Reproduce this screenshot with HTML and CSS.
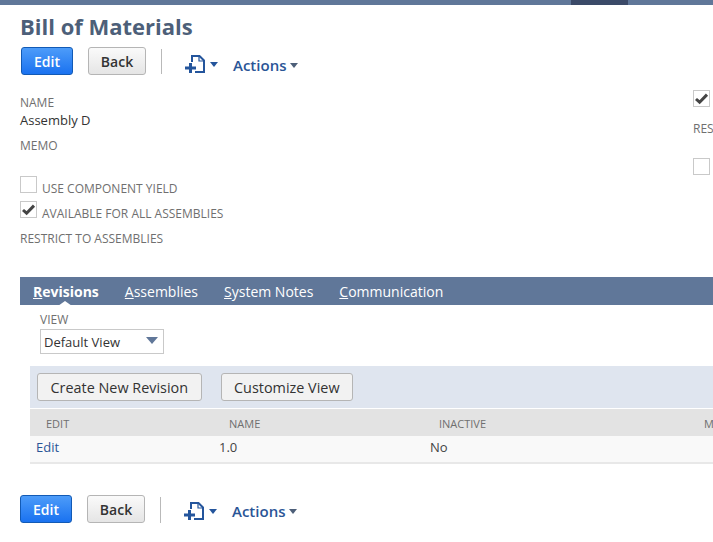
FILE: index.html
```html
<!DOCTYPE html>
<html lang="en">
<head>
<meta charset="utf-8">
<title>Bill of Materials</title>
<link rel="stylesheet" href="styles.css">
</head>
<body>
<svg class="defs" width="0" height="0" aria-hidden="true">
  <symbol id="newdoc" viewBox="0 0 20 18">
    <path d="M7 7V1h7.5L19 5.5V17H10" fill="none" stroke="#24559c" stroke-width="2"/>
    <path d="M14 1V6H19" fill="none" stroke="#24559c" stroke-width="1.2"/>
    <path d="M0 13H11M5.5 8V18" fill="none" stroke="#24559c" stroke-width="3"/>
  </symbol>
  <symbol id="tick" viewBox="0 0 15 15">
    <path d="M2 8l3.6 3.2L13 3.6" fill="none" stroke="#444" stroke-width="3"/>
  </symbol>
</svg>
<div class="topbar"><div class="topbar-active"></div></div>
<main class="page">
  <h1 class="title">Bill of Materials</h1>
  <div class="toolbar toolbar-top">
    <button class="btn btn-primary">Edit</button>
    <button class="btn btn-back">Back</button>
    <span class="divider"></span>
    <svg class="doc-icon"><use href="#newdoc"/></svg>
    <span class="caret caret-blue"></span>
    <span class="actions">Actions</span>
    <span class="caret caret-grey"></span>
  </div>
  <section class="form">
    <div class="col-left">
      <div class="label label-name">NAME</div>
      <div class="value">Assembly D</div>
      <div class="label label-memo">MEMO</div>
      <div class="check-row check-first"><span class="box"></span><span class="label">USE COMPONENT YIELD</span></div>
      <div class="check-row check-second"><span class="box"><svg class="tick"><use href="#tick"/></svg></span><span class="label">AVAILABLE FOR ALL ASSEMBLIES</span></div>
      <div class="label label-restrict">RESTRICT TO ASSEMBLIES</div>
    </div>
    <div class="col-right">
      <span class="box"><svg class="tick"><use href="#tick"/></svg></span>
      <div class="label label-res">RESTRICT</div>
      <span class="box"></span>
    </div>
  </section>
  <nav class="tabs">
    <span class="tab tab-active"><u>R</u>evisions</span>
    <span class="tab"><u>A</u>ssemblies</span>
    <span class="tab"><u>S</u>ystem Notes</span>
    <span class="tab"><u>C</u>ommunication</span>
  </nav>
  <section class="panel">
    <div class="label view-label">VIEW</div>
    <div class="select"><span>Default View</span><span class="select-arrow"></span></div>
    <div class="buttonbar">
      <button class="btn btn-sub">Create New Revision</button>
      <button class="btn btn-sub">Customize View</button>
    </div>
    <div class="grid grid-head">
      <span class="cell c-edit">EDIT</span>
      <span class="cell c-name">NAME</span>
      <span class="cell c-inactive">INACTIVE</span>
      <span class="cell c-memo">MEMO</span>
    </div>
    <div class="grid grid-row">
      <span class="cell c-edit-v">Edit</span>
      <span class="cell c-name-v">1.0</span>
      <span class="cell c-inactive-v">No</span>
    </div>
  </section>
  <div class="toolbar toolbar-bottom">
    <button class="btn btn-primary">Edit</button>
    <button class="btn btn-back">Back</button>
    <span class="divider"></span>
    <svg class="doc-icon"><use href="#newdoc"/></svg>
    <span class="caret caret-blue"></span>
    <span class="actions">Actions</span>
    <span class="caret caret-grey"></span>
  </div>
</main>
</body>
</html>
```
FILE: styles.css
```css
* { box-sizing: border-box; }
html, body { margin: 0; padding: 0; height: 542px; overflow: hidden; background: #fff; }
body { font-family: "Open Sans", sans-serif; font-size: 13px; color: #333; }
.defs { position: absolute; }

.topbar { height: 5px; background: #607799; padding-left: 571px; }
.topbar-active { width: 57px; height: 5px; background: #3b4a68; }

.page { width: 713px; overflow: hidden; }
.title { margin: 8px 0 0 20px; font-size: 22px; line-height: 26px; font-weight: 700; color: #4d5f79; letter-spacing: 0; }

.toolbar { display: flex; align-items: center; height: 28px; }
.toolbar-top { margin: 8px 0 0 21px; }
.toolbar-bottom { margin: 31px 0 0 20px; }

.btn { font-family: "Open Sans", sans-serif; font-size: 14px; font-weight: 600; padding: 0; border-radius: 3px; cursor: pointer; }
.btn-primary { width: 52px; height: 28px; color: #fff; border: 1px solid #125ab5; background: linear-gradient(#4d9cf9, #1a72f0); }
.btn-back { width: 58px; height: 28px; margin-left: 15px; color: #333; border: 1px solid #b5b5b5; background: linear-gradient(#fafafa, #e5e5e5); }
.divider { width: 1px; margin-left: 15px; background: #b9b9b9; }
.doc-icon { width: 20px; height: 18px; margin-left: 23px; }
.caret { width: 0; height: 0; border-left: 4px solid transparent; border-right: 4px solid transparent; border-top: 5px solid; }
.caret-blue { margin-left: 5px; color: #24559c; }
.caret-grey { margin-left: 4px; color: #4d5f79; }
.actions { margin-left: 15px; font-size: 15px; font-weight: 600; color: #2a5596; }

.toolbar-top .divider { height: 25px; margin-top: 1px; }
.toolbar-top .doc-icon { margin-top: 6px; }
.toolbar-top .caret-blue { margin-top: 7px; }
.toolbar-top .actions { margin-top: 8px; }
.toolbar-top .caret-grey { margin-top: 9px; }
.toolbar-bottom .divider { height: 30px; margin-top: 6px; }
.toolbar-bottom .doc-icon { margin-top: 4px; }
.toolbar-bottom .caret-blue { margin-top: 4px; }
.toolbar-bottom .actions { margin-top: 4px; }
.toolbar-bottom .caret-grey { margin-top: 5px; }

.form { display: flex; height: 202px; }
.col-left { width: 693px; padding-left: 20px; flex: none; }
.col-right { flex: none; width: 100px; display: flex; flex-direction: column; align-items: flex-start; padding-top: 15px; }

.label { font-size: 12px; line-height: 16px; color: #6f6f6f; white-space: nowrap; }
.label-name { margin-top: 20px; }
.value { font-size: 13px; line-height: 18px; color: #333; }
.label-memo { margin-top: 9px; }
.check-row { display: flex; align-items: flex-end; gap: 5px; height: 17px; }
.check-first { margin-top: 22px; }
.check-second { margin-top: 8px; }
.check-row .label { position: relative; top: 4px; }
.label-restrict { margin-top: 13px; }
.label-res { margin: 14px 0 21px; }

.box { display: block; width: 17px; height: 17px; flex: none; border: 1px solid #c9c9c9; background: #fff; overflow: hidden; }
.tick { display: block; width: 15px; height: 15px; }

.tabs { display: flex; align-items: center; height: 28px; margin-left: 20px; padding-left: 13px; gap: 26px; background: #607799; }
.tab { position: relative; font-size: 14px; color: #fff; white-space: nowrap; }
.tab-active { font-weight: 700; }
.tab-active::after { content: ""; position: absolute; left: 25px; bottom: -5px; border-left: 7px solid transparent; border-right: 7px solid transparent; border-bottom: 5px solid #fff; }

.panel { margin-left: 30px; }
.view-label { margin: 6px 0 1px 10px; line-height: 17px; }
.select { display: flex; align-items: center; justify-content: space-between; width: 124px; height: 25px; margin: 0 0 0 10px; padding: 0 5px 0 3px; border: 1px solid #c9c9c9; font-size: 13px; color: #333; }
.select-arrow { width: 0; height: 0; margin: 0 0 2px 0; border-left: 6px solid transparent; border-right: 6px solid transparent; border-top: 7px solid #607799; }
.buttonbar { display: flex; gap: 19px; align-items: center; height: 42px; margin-top: 12px; padding: 0 0 0 7px; background: #dfe5ef; }
.btn-sub { height: 28px; padding: 0 12.5px; font-size: 14.4px; font-weight: 500; color: #333; border: 1px solid #b5b5b5; background: #f2f2f2; }

.grid { position: relative; }
.grid-head { height: 27px; margin-top: 1px; background: #e3e3e3; font-size: 11px; color: #6f6f6f; }
.grid-row { height: 28px; background: #f9f9f9; border-bottom: 2px solid #e8e8e8; font-size: 13px; color: #444; }
.cell { position: absolute; top: 50%; transform: translateY(-50%); white-space: nowrap; }
.grid-row .cell { top: 44%; }
.c-edit { left: 16px; }
.c-name { left: 199px; }
.c-inactive { left: 409px; }
.c-memo { left: 674px; }
.c-edit-v { left: 6px; color: #2a5596; }
.c-name-v { left: 189px; }
.c-inactive-v { left: 400px; }
```
